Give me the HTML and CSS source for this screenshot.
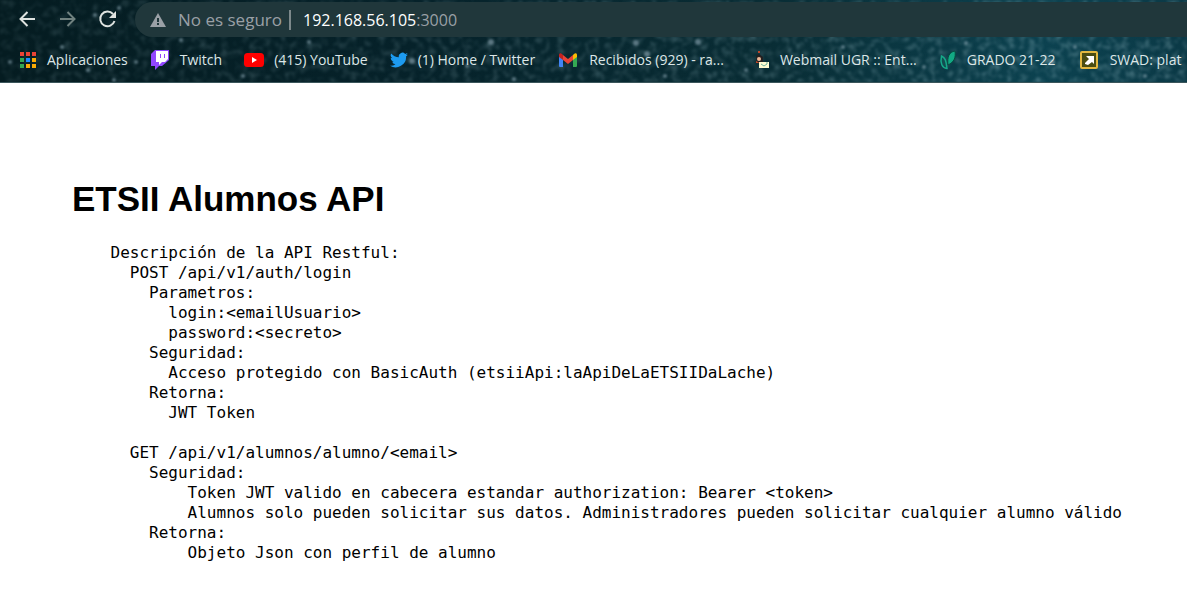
FILE: index.html
```html
<!DOCTYPE html>
<html lang="es">
<head>
<meta charset="utf-8">
<meta name="viewport" content="width=device-width, initial-scale=1">
<title>ETSII Alumnos API</title>
<link rel="stylesheet" href="styles.css">
</head>
<body>
<header class="chrome">
  <svg class="sky" width="100%" height="100%" aria-hidden="true">
    <defs>
      <filter id="dust" x="0" y="0" width="100%" height="100%">
        <feTurbulence type="fractalNoise" baseFrequency="0.14" numOctaves="2" seed="8"/>
        <feColorMatrix values="0 0 0 0 .4  0 0 0 0 .62  0 0 0 0 .68  1.8 0 0 0 -.8"/>
        <feGaussianBlur stdDeviation="1"/>
      </filter>
      <filter id="soft"><feGaussianBlur stdDeviation="1"/></filter>
      <linearGradient id="fade"><stop offset="0" stop-color="#fff" stop-opacity=".2"/><stop offset=".45" stop-color="#fff" stop-opacity=".3"/><stop offset="1" stop-color="#fff" stop-opacity=".5"/></linearGradient>
      <mask id="fademask"><rect width="100%" height="100%" fill="url(#fade)"/></mask>
    </defs>
    <g mask="url(#fademask)"><rect width="100%" height="100%" filter="url(#dust)"/></g>
    <g fill="#8fa9b5" fill-opacity=".6" filter="url(#soft)">
      <circle cx="62" cy="47" r="2"/><circle cx="119" cy="8" r="2"/><circle cx="95" cy="15" r="2"/><circle cx="88" cy="70" r="2"/><circle cx="114" cy="80" r="2"/><circle cx="181" cy="40" r="2"/><circle cx="10" cy="62" r="2"/><circle cx="136" cy="62" r="2"/><circle cx="243" cy="76" r="2"/><circle cx="309" cy="42" r="2"/><circle cx="412" cy="61" r="3"/><circle cx="467" cy="66" r="2"/><circle cx="491" cy="42" r="3"/><circle cx="514" cy="79" r="2"/><circle cx="636" cy="43" r="3"/><circle cx="647" cy="54" r="3"/><circle cx="698" cy="42" r="3"/><circle cx="665" cy="76" r="2"/><circle cx="746" cy="70" r="2"/><circle cx="843" cy="47" r="2"/><circle cx="924" cy="67" r="2"/><circle cx="966" cy="43" r="2"/><circle cx="1052" cy="62" r="3"/><circle cx="1075" cy="47" r="2"/><circle cx="1145" cy="76" r="2"/>
    </g>
  </svg>
  <div class="toolbar">
    <nav class="nav" aria-label="Navegación">
      <button class="nav-button" aria-label="Atrás"><svg width="20" height="20" viewBox="0 0 20 20"><path d="M17 9H3M9.500 2L2.500 9l7 7"/></svg></button>
      <button class="nav-button nav-button-off" aria-label="Adelante" disabled><svg width="20" height="20" viewBox="0 0 20 20"><path d="M2 9h14M9.500 2l7 7-7 7"/></svg></button>
      <button class="nav-button" aria-label="Recargar"><svg width="20" height="20" viewBox="0 0 20 20"><path d="M15 4A7.300 7.300 0 1 0 16.500 11"/><path class="solid" d="M18 1v7h-7z"/></svg></button>
    </nav>
    <div class="address">
      <svg width="16" height="14" viewBox="0 0 16 14" aria-hidden="true"><path d="M8 0l8 14H0z" fill="#9aa0a6"/><path d="M7 5h2v4H7zM7 10h2v2H7z" fill="#20373b"/></svg>
      <span class="warning">No es seguro</span>
      <span class="divider"></span>
      <span class="url"><span class="host">192.168.56.105</span>:3000</span>
    </div>
  </div>
  <nav class="bookmarks" aria-label="Marcadores">
    <a class="bookmark apps" href="#"><svg width="18" height="18" viewBox="0 0 18 18"><path fill="#ea4335" d="M1 1h4v4H1zM7 1h4v4H7zM13 1h4v4h-4z"/><path fill="#34a853" d="M1 7h4v4H1zM1 13h4v4H1z"/><path fill="#1a8cff" d="M7 7h4v4H7z"/><path fill="#fbab05" d="M13 7h4v4h-4zM7 13h4v4H7zM13 13h4v4h-4z"/></svg><span class="label">Aplicaciones</span></a>
    <a class="bookmark twitch" href="#"><svg width="20" height="20" viewBox="0 0 20 20"><path fill="#9146ff" d="M5 0L1 4v12h4v4l4-4h3l7-6V0z"/><path fill="#fff" d="M6 1h12v8l-3 3h-3l-3 3v-3H6z"/><path fill="#9146ff" d="M10 4h1v4h-1zM14 4h1v4h-1z"/></svg><span class="label">Twitch</span></a>
    <a class="bookmark youtube" href="#"><svg width="20" height="20" viewBox="0 0 20 20"><rect y="3" width="20" height="14" rx="3.500" fill="#f00"/><path fill="#fff" d="M8 7l5 3-5 3z"/></svg><span class="label">(415) YouTube</span></a>
    <a class="bookmark twitter" href="#"><svg width="18" height="18" viewBox="0 0 24 24"><path fill="#1d9bf0" d="M24 4.600a10 10 0 0 1-2.800.8 5 5 0 0 0 2.100-2.700 10 10 0 0 1-3.100 1.200 4.900 4.900 0 0 0-8.400 4.500A14 14 0 0 1 1.700 3.200a4.900 4.900 0 0 0 1.500 6.500 5 5 0 0 1-2.200-.6 4.900 4.900 0 0 0 3.900 4.900 5 5 0 0 1-2.200.1 4.900 4.900 0 0 0 4.600 3.400A10 10 0 0 1 0 19.500 14 14 0 0 0 21.500 7.100 10 10 0 0 0 24 4.600z"/></svg><span class="label">(1) Home / Twitter</span></a>
    <a class="bookmark gmail" href="#"><svg width="18" height="18" viewBox="0 0 18 18"><path fill="#4285f4" d="M0 5l4 3v8H1q-1 0-1-1z"/><path fill="#34a853" d="M14 8l4-3v10q0 1-1 1h-3z"/><path fill="#ea4335" d="M4 4l5 4 5-4v5l-5 4-5-4z"/><path fill="#c5221f" d="M0 4c0-2 2-2 3-1l1 1v5L0 6z"/><path fill="#fbbc04" d="M18 4c0-2-2-2-3-1l-1 1v5l4-3z"/></svg><span class="label">Recibidos (929) - ra...</span></a>
    <a class="bookmark webmail" href="#"><svg width="18" height="18" viewBox="0 0 18 18"><path fill="#242020" d="M2 5l3-2 4 3v5l-6 1z"/><path fill="#bd4528" d="M4 0h2v2H4zM2 10l4 2H2z"/><circle cx="5" cy="8" r="2" fill="#efb797"/><path fill="#fffbd0" d="M5 11h10v6H5z"/><path fill="none" stroke="#6fb29b" d="M7 13l3 2 3-2M12 12h2"/></svg><span class="label">Webmail UGR :: Ent...</span></a>
    <a class="bookmark grado" href="#"><svg width="18" height="20" viewBox="0 0 18 20"><path fill="#124c50" stroke="#16a889" stroke-width="1.500" d="M8 18.500C3 18 1 13 2.500 6 7 8 7 12 8 18.500z"/><path fill="#12a884" stroke="#064b3e" d="M9 15c-1-8 1-13 7-14 1 7-1 11-7 14z"/></svg><span class="label">GRADO 21-22</span></a>
    <a class="bookmark swad" href="#"><svg width="18" height="18" viewBox="0 0 18 18"><rect x="1" y="1" width="16" height="16" rx="1" fill="#4a4d12" stroke="#e2b840" stroke-width="2"/><path fill="#fff" d="M6 5h8v8l-2-2-4 3-3-1v-1l4-4z"/></svg><span class="label">SWAD: plat</span></a>
  </nav>
</header>
<main class="page">
  <h1 class="title">ETSII Alumnos API</h1>
  <pre class="description">    Descripción de la API Restful:
      POST /api/v1/auth/login
        Parametros:
          login:&lt;emailUsuario&gt;
          password:&lt;secreto&gt;
        Seguridad:
          Acceso protegido con BasicAuth (etsiiApi:laApiDeLaETSIIDaLache)
        Retorna:
          JWT Token

      GET /api/v1/alumnos/alumno/&lt;email&gt;
        Seguridad:
            Token JWT valido en cabecera estandar authorization: Bearer &lt;token&gt;
            Alumnos solo pueden solicitar sus datos. Administradores pueden solicitar cualquier alumno válido
        Retorna:
            Objeto Json con perfil de alumno</pre>
</main>
</body>
</html>
```
FILE: styles.css
```css
* { box-sizing: border-box; }
body { margin: 0; background: #fff; color: #000; font-family: "Open Sans", "Noto Sans", sans-serif; }
.chrome { position: relative; overflow: hidden; background: linear-gradient(90deg, #051c21 0%, #06222a 35%, #092d35 65%, #0c4250 88%, #0b3946 100%); border-bottom: 1px solid #3b565b; }
.sky { position: absolute; inset: 0; }
.toolbar { position: relative; display: flex; align-items: center; padding-top: 2px; }
.nav { display: flex; gap: 20px; padding: 0 17px 0 18px; }
.nav-button { width: 20px; height: 20px; padding: 0; border: 0; background: none; color: #dfe3e0; }
.nav-button-off { color: #70817f; }
.nav-button svg { display: block; fill: none; stroke: currentColor; stroke-width: 2; }
.nav-button .solid { fill: currentColor; stroke: none; }
.address { flex: 1; display: flex; align-items: center; height: 35px; padding-left: 15px; background: #20373b; border-radius: 18px 0 0 18px; color: #9aa0a6; font-size: 17px; white-space: nowrap; }
.warning { margin-left: 12px; }
.divider { width: 2px; height: 20px; margin: 0 12px 0 7px; background: #7d898b; }
.url { font-size: 16px; }
.host { color: #fff; }
.bookmarks { position: relative; display: flex; align-items: center; height: 45px; padding-left: 19px; white-space: nowrap; overflow: hidden; }
.bookmark { flex: none; display: flex; align-items: center; gap: 10px; margin-right: 22px; color: #dce6e7; font-size: 14px; text-decoration: none; }
.gmail { gap: 12px; margin-right: 30px; }
.webmail { gap: 8px; }
.twitter, .grado { margin-right: 24px; }
.swad { gap: 12px; margin-right: 0; }
.page { padding: 96px 72px 40px; }
.title { margin: 0; font: bold 35px/40px "Liberation Sans", Arial, sans-serif; }
.description { margin: 24px 0 0; font: 16px/20px "DejaVu Sans Mono", monospace; }
```
